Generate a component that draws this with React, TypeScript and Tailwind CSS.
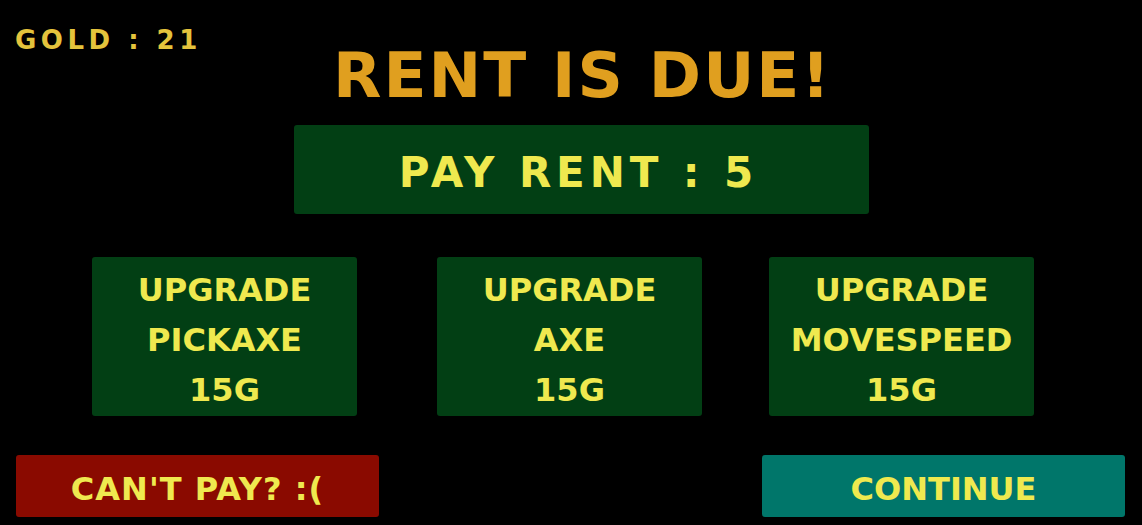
import React from "react";

const font = { fontFamily: '"DejaVu Sans", "Liberation Sans", sans-serif' };

function UpgradeCard({ item, className }: { item: string; className?: string }) {
  return (
    <div
      className={`flex h-[159px] w-[265px] flex-col items-center rounded-[3px] bg-[#023f14] pt-[8px] text-[32px] font-bold leading-[50px] text-[#efe94f] ${className ?? ""}`}
    >
      <span>UPGRADE</span>
      <span>{item}</span>
      <span>15G</span>
    </div>
  );
}

export default function App() {
  return (
    <div className="flex h-[525px] w-[1142px] flex-col bg-black" style={font}>
      {/* gold counter */}
      <div className="pl-[15px] pt-[30px] text-[26px] font-bold leading-[20px] tracking-[4.5px] text-[#e4c33c]">
        GOLD : 21
      </div>

      {/* heading */}
      <h1 className="mt-[1px] pl-[23px] text-center text-[63px] font-bold leading-[50px] tracking-[2px] text-[#e09f1f]">
        RENT IS DUE!
      </h1>

      {/* pay rent button */}
      <button className="ml-[294px] mt-[24px] flex h-[89px] w-[575px] items-center justify-center rounded-[3px] bg-[#023f14] pr-[6px] pt-[6px] text-[42px] font-bold leading-[50px] tracking-[4.9px] text-[#efe94f]">
        PAY RENT : 5
      </button>

      {/* upgrade shop */}
      <div className="mt-[43px] flex pl-[92px]">
        <UpgradeCard item="PICKAXE" />
        <UpgradeCard item="AXE" className="ml-[80px]" />
        <UpgradeCard item="MOVESPEED" className="ml-[67px]" />
      </div>

      {/* actions */}
      <div className="mt-[39px] flex justify-between pl-[16px] pr-[17px]">
        <button className="flex h-[62px] w-[363px] items-center justify-center rounded-[3px] bg-[#8a0a00] pt-[5px] text-[32px] font-bold leading-[40px] tracking-[1px] text-[#efe94f]">
          CAN'T PAY? :(
        </button>
        <button className="flex h-[62px] w-[363px] items-center justify-center rounded-[3px] bg-[#00766a] pt-[5px] text-[32px] font-bold leading-[40px] text-[#efe94f]">
          CONTINUE
        </button>
      </div>
    </div>
  );
}
